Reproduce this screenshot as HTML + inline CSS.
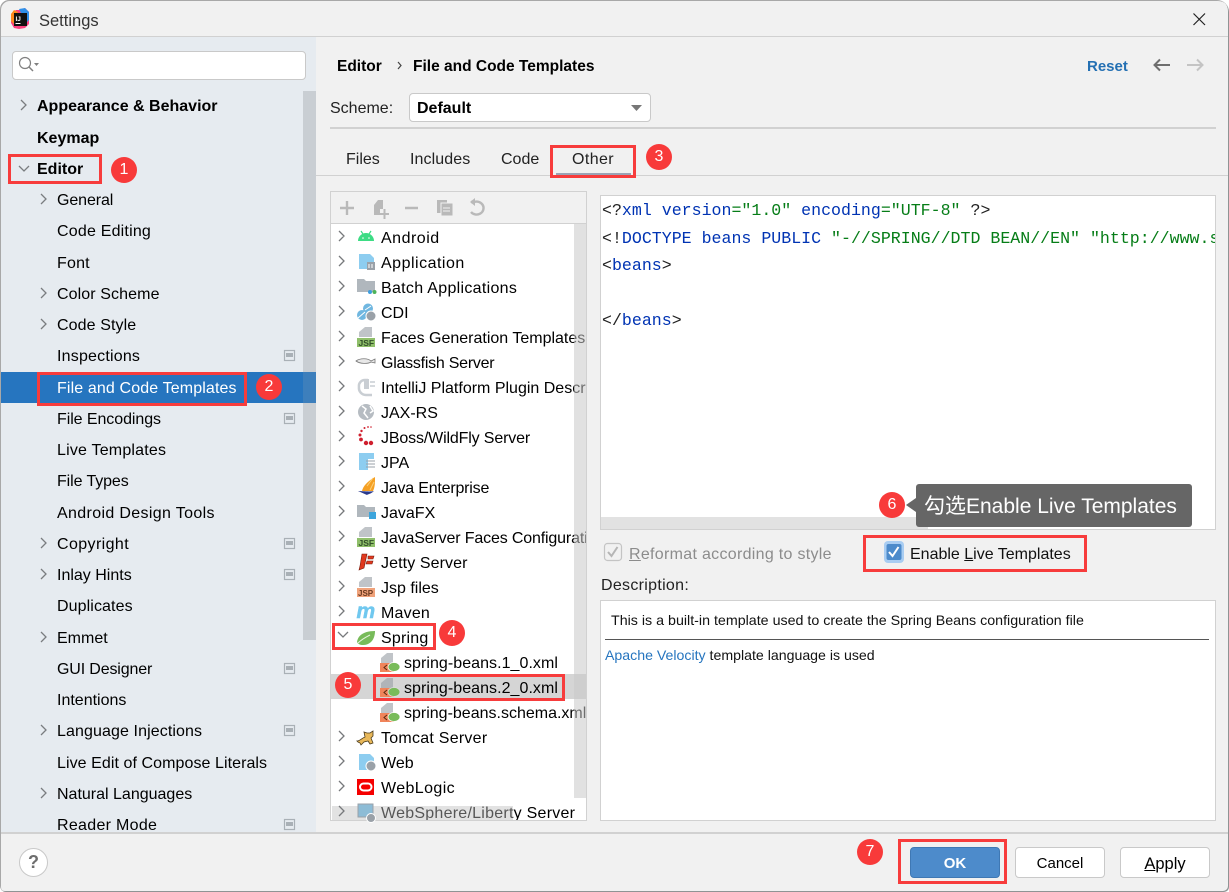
<!DOCTYPE html>
<html><head><meta charset="utf-8"><style>
html,body{margin:0;padding:0;width:1229px;height:892px;overflow:hidden;background:#fff}
body{font-family:"Liberation Sans","Noto Sans CJK SC",sans-serif;font-size:16px;color:#000}
div{position:absolute}
.t{position:absolute;white-space:nowrap;line-height:20px;height:20px;margin-top:2px}
.b{font-weight:bold}
.m{font-family:"Liberation Mono",monospace;font-size:16.6px;color:#0033b3;margin-top:0}
.m i{font-style:normal;color:#067d17}.m u{text-decoration:none;color:#222}
.d{font-size:14.25px;margin-top:1px}
.r{border:3px solid #f73c3c;box-sizing:border-box}
.c{width:26px;height:26px;border-radius:50%;background:#f83a3a;color:#fff;text-align:center;line-height:25px;font-size:16px}
.btn{box-sizing:border-box;border:1px solid #c9c9c9;border-radius:4px;background:#fff;text-align:center;line-height:32px;height:31px;top:847px;width:90px;font-size:15px}
svg{position:absolute;left:0;top:0}
</style></head><body>
<div style="left:0;top:0;width:1229px;height:892px;background:#f1f1f1;border-radius:9px 12px 5px 6px;box-shadow:inset 1px 1px 0 #a8a8a8,inset -1px -1px 0 #8f9494"></div>
<div style="left:1px;top:36px;width:1227px;height:1px;background:#d1d1d1"></div>
<div style="left:1px;top:37px;width:315px;height:796px;background:#e6ebf0"></div>
<div style="left:303px;top:91px;width:13px;height:549px;background:#c9ced3"></div>
<div style="left:1px;top:372px;width:315px;height:31px;background:#2675bf"></div>
<div style="left:303px;top:372px;width:13px;height:31px;background:#3d7fbc"></div>
<div style="left:1px;top:832px;width:1227px;height:2px;background:#d1d1d1"></div>
<div style="left:12px;top:51px;width:294px;height:29px;box-sizing:border-box;background:#fff;border:1px solid #c9c9c9;border-radius:4px"></div>

<span class="t" style="left:39px;top:9px;color:#333;font-size:16.5px">Settings</span>
<span class="t b" style="left:37px;top:95px">Appearance &amp; Behavior</span>
<span class="t b" style="left:37px;top:127px">Keymap</span>
<span class="t b" style="left:37px;top:158px">Editor</span>
<span class="t" style="left:57px;top:189px;letter-spacing:-.1px">General</span>
<span class="t" style="left:57px;top:220px;letter-spacing:.2px">Code Editing</span>
<span class="t" style="left:57px;top:252px;letter-spacing:.2px">Font</span>
<span class="t" style="left:57px;top:283px;letter-spacing:.1px">Color Scheme</span>
<span class="t" style="left:57px;top:314px;letter-spacing:.1px">Code Style</span>
<span class="t" style="left:57px;top:345px;letter-spacing:.2px">Inspections</span>
<span class="t" style="left:57px;top:377px;color:#fff;letter-spacing:.13px">File and Code Templates</span>
<span class="t" style="left:57px;top:408px;letter-spacing:-.07px">File Encodings</span>
<span class="t" style="left:57px;top:439px;letter-spacing:.2px">Live Templates</span>
<span class="t" style="left:57px;top:470px;letter-spacing:-.1px">File Types</span>
<span class="t" style="left:57px;top:502px;letter-spacing:.35px">Android Design Tools</span>
<span class="t" style="left:57px;top:533px;letter-spacing:.4px">Copyright</span>
<span class="t" style="left:57px;top:564px">Inlay Hints</span>
<span class="t" style="left:57px;top:595px;letter-spacing:.1px">Duplicates</span>
<span class="t" style="left:57px;top:627px">Emmet</span>
<span class="t" style="left:57px;top:658px;letter-spacing:-.15px">GUI Designer</span>
<span class="t" style="left:57px;top:689px">Intentions</span>
<span class="t" style="left:57px;top:720px;letter-spacing:.1px">Language Injections</span>
<span class="t" style="left:57px;top:752px;letter-spacing:.07px">Live Edit of Compose Literals</span>
<span class="t" style="left:57px;top:783px">Natural Languages</span>
<div style="left:1px;top:814px;width:315px;height:18px;overflow:hidden"><span class="t" style="left:56px;top:0;letter-spacing:.3px">Reader Mode</span></div>

<span class="t b" style="left:337px;top:55px;font-size:15.5px">Editor</span>
<span class="t b" style="left:413px;top:55px;font-size:15.5px">File and Code Templates</span>
<span class="t b" style="left:1087px;top:55px;color:#2470b3;font-size:15px">Reset</span>
<span class="t" style="left:330px;top:97px;color:#222">Scheme:</span>
<div style="left:409px;top:93px;width:242px;height:29px;box-sizing:border-box;background:#fff;border:1px solid #c9c9c9;border-radius:4px"></div>
<span class="t b" style="left:417px;top:97px">Default</span>
<div style="left:330px;top:127px;width:886px;height:2px;background:#d1d1d1"></div>
<div style="left:316px;top:175px;width:912px;height:1px;background:#d1d1d1"></div>
<div style="left:556px;top:173px;width:75px;height:3px;background:#9ba3b5"></div>
<span class="t" style="left:346px;top:148px;color:#222">Files</span>
<span class="t" style="left:410px;top:148px;color:#222;letter-spacing:.1px">Includes</span>
<span class="t" style="left:501px;top:148px;color:#222">Code</span>
<span class="t" style="left:572px;top:148px;color:#222;letter-spacing:.4px">Other</span>

<div style="left:330px;top:191px;width:257px;height:630px;box-sizing:border-box;background:#fff;border:1px solid #d1d1d1;overflow:hidden">
<div style="left:0;top:0;width:255px;height:31px;background:#f1f1f1;border-bottom:1px solid #d1d1d1"></div>
<div style="left:0;top:482px;width:255px;height:25px;background:#d5d5d5"></div>
<span class="t" style="left:50px;top:35px;letter-spacing:.5px">Android</span>
<span class="t" style="left:50px;top:60px;letter-spacing:.5px">Application</span>
<span class="t" style="left:50px;top:85px;letter-spacing:.3px">Batch Applications</span>
<span class="t" style="left:50px;top:110px">CDI</span>
<span class="t" style="left:50px;top:135px">Faces Generation Templates</span>
<span class="t" style="left:50px;top:160px;letter-spacing:-.25px">Glassfish Server</span>
<span class="t" style="left:50px;top:185px">IntelliJ Platform Plugin Descr</span>
<span class="t" style="left:50px;top:210px">JAX-RS</span>
<span class="t" style="left:50px;top:235px;letter-spacing:-.15px">JBoss/WildFly Server</span>
<span class="t" style="left:50px;top:260px">JPA</span>
<span class="t" style="left:50px;top:285px;letter-spacing:-.2px">Java Enterprise</span>
<span class="t" style="left:50px;top:310px">JavaFX</span>
<span class="t" style="left:50px;top:335px;letter-spacing:-.15px">JavaServer Faces Configurati</span>
<span class="t" style="left:50px;top:360px;letter-spacing:.1px">Jetty Server</span>
<span class="t" style="left:50px;top:385px">Jsp files</span>
<span class="t" style="left:50px;top:410px;letter-spacing:.2px">Maven</span>
<span class="t" style="left:50px;top:435px;letter-spacing:.2px">Spring</span>
<span class="t" style="left:73px;top:460px;letter-spacing:.05px">spring-beans.1_0.xml</span>
<span class="t" style="left:73px;top:485px;letter-spacing:.05px">spring-beans.2_0.xml</span>
<span class="t" style="left:73px;top:510px">spring-beans.schema.xml</span>
<span class="t" style="left:50px;top:535px;letter-spacing:.25px">Tomcat Server</span>
<span class="t" style="left:50px;top:560px">Web</span>
<span class="t" style="left:50px;top:585px;letter-spacing:.4px">WebLogic</span>
<span class="t" style="left:50px;top:610px;letter-spacing:.25px">WebSphere/Liberty Server</span>
<div style="left:243px;top:32px;width:12px;height:574px;background:rgba(200,200,200,.55)"></div>
<div style="left:1px;top:614px;width:181px;height:14px;background:rgba(190,190,190,.45)"></div>
</div>

<div style="left:600px;top:195px;width:616px;height:335px;box-sizing:border-box;background:#fff;border:1px solid #d1d1d1;overflow:hidden">
<span class="t m" style="left:1px;top:4px;line-height:22px"><u>&lt;?</u>xml version<i>="1.0"</i> encoding<i>="UTF-8"</i> <u>?&gt;</u></span>
<span class="t m" style="left:1px;top:32px;line-height:22px"><u>&lt;!</u>DOCTYPE beans PUBLIC <i>"-//SPRING//DTD BEAN//EN" "http://www.springframework</i></span>
<span class="t m" style="left:1px;top:59px;line-height:22px"><u>&lt;</u>beans<u>&gt;</u></span>
<span class="t m" style="left:1px;top:114px;line-height:22px"><u>&lt;/</u>beans<u>&gt;</u></span>
<div style="left:0;top:321px;width:327px;height:12px;background:#e2e2e2"></div>
</div>
<div style="left:916px;top:484px;width:276px;height:43px;background:#666;border-radius:3px"></div>
<div style="left:906px;top:498px;width:0;height:0;border:7px solid transparent;border-left:0;border-right:10px solid #666"></div>
<span class="t" style="left:924px;top:495px;color:#fff;font-size:21px;line-height:24px;height:24px;margin-top:0">勾选Enable Live Templates</span>

<span class="t" style="left:629px;top:543px;color:#8c8c8c;letter-spacing:.3px"><span style="text-decoration:underline">R</span>eformat according to style</span>
<span class="t" style="left:910px;top:543px;color:#111">Enable <span style="text-decoration:underline">L</span>ive Templates</span>
<span class="t" style="left:601px;top:574px;color:#222;letter-spacing:.3px">Description:</span>
<div style="left:600px;top:600px;width:616px;height:221px;box-sizing:border-box;background:#fff;border:1px solid #d1d1d1"></div>
<span class="t d" style="left:611px;top:610px;color:#111">This is a built-in template used to create the Spring Beans configuration file</span>
<div style="left:605px;top:639px;width:604px;height:1px;background:#555"></div>
<span class="t d" style="left:605px;top:644px;color:#111;font-size:14.15px"><span style="color:#2675bf">Apache Velocity</span> template language is used</span>

<div style="left:19px;top:848px;width:29px;height:29px;box-sizing:border-box;border:1px solid #c9c9c9;border-radius:50%;background:#fff;text-align:center;line-height:27px;font-weight:bold;font-size:18px;color:#6e6e6e">?</div>
<div class="btn b" style="left:910px;background:#4d8bcb;border-color:#3f78b4;color:#fff">OK</div>
<div class="btn" style="left:1015px">Cancel</div>
<div class="btn" style="left:1120px;font-size:16.5px"><span style="text-decoration:underline">A</span>pply</div>

<svg width="1229" height="892" viewBox="0 0 1229 892" fill="none">
<!-- logo -->
<path d="M11 14l5-4 5 0 4-2 4 4v12l-4 4-6 1-5-1-3-5z" fill="#fc3f7f"/><path d="M19 9l6-1 4 4 0 8-3 3z" fill="#2f8fe8"/><path d="M11 14l3-4 4 2-4 12-3-3z" fill="#fd8a1e"/>
<rect x="14" y="13" width="13" height="13" fill="#111"/><text x="15.500" y="21" font-family="Liberation Sans" font-size="6.500" font-weight="bold" fill="#fff">IJ</text><rect x="15.500" y="23" width="5" height="1" fill="#fff"/>
<!-- close -->
<path d="M1193.500 13.500L1205 25M1205 13.500L1193.500 25" stroke="#222" stroke-width="1.200"/>
<!-- search -->
<circle cx="25" cy="63" r="5.500" stroke="#808080" stroke-width="1.200"/><path d="M29 67l4 4" stroke="#808080" stroke-width="1.500"/><path d="M34 63h5l-2.500 3z" fill="#808080"/>
<!-- sidebar chevrons -->
<g stroke="#7a7d80" stroke-width="1.300">
<path d="M21 100l5 5-5 5M41 194l5 5-5 5M41 288l5 5-5 5M41 319l5 5-5 5M41 538l5 5-5 5M41 569l5 5-5 5M41 632l5 5-5 5M41 725l5 5-5 5M41 788l5 5-5 5"/>
<path d="M19 166l5 5 5-5"/>
</g>
<!-- project icons -->
<g fill="#e6ebf0" stroke="#a9b0b6" stroke-width="1.200">
<rect x="284.500" y="350.500" width="10" height="10"/><rect x="284.500" y="413.500" width="10" height="10"/><rect x="284.500" y="538.500" width="10" height="10"/><rect x="284.500" y="569.500" width="10" height="10"/><rect x="284.500" y="663.500" width="10" height="10"/><rect x="284.500" y="725.500" width="10" height="10"/><rect x="284.500" y="819.500" width="10" height="10"/>
</g>
<g fill="#a9b0b6"><rect x="286" y="353" width="7" height="4"/><rect x="286" y="416" width="7" height="4"/><rect x="286" y="541" width="7" height="4"/><rect x="286" y="572" width="7" height="4"/><rect x="286" y="666" width="7" height="4"/><rect x="286" y="728" width="7" height="4"/><rect x="286" y="822" width="7" height="4"/></g>
<!-- breadcrumb sep, arrows, combo -->
<path d="M398 62l3 3.500-3 3.500" stroke="#444" stroke-width="1.200"/>
<path d="M1170 65h-15M1160 59.500l-5.500 5.500 5.500 5.500" stroke="#6e6e6e" stroke-width="2"/>
<path d="M1187 65h15M1197 59.500l5.500 5.500-5.500 5.500" stroke="#c4c4c4" stroke-width="2"/>
<path d="M631 105h11l-5.500 6z" fill="#777"/>
<!-- tree toolbar -->
<g stroke="#b9b9b9" stroke-width="2.400">
<path d="M340 208h14M347 201v14M405 208h13"/>
<path d="M471 202h3a7 6.500 0 1 1-3 10" fill="none"/>
</g>
<path d="M470 202l5-4v8z" fill="#b9b9b9"/>
<path d="M374 205l4-5h5v9h-3v6h-6z" fill="#b9b9b9"/><path d="M380 214h9M384.500 209v10" stroke="#b9b9b9" stroke-width="2"/>
<rect x="437" y="200" width="10" height="13" fill="#b9b9b9"/><rect x="441" y="203" width="12" height="13" fill="#b9b9b9" stroke="#f1f1f1"/><path d="M443 208h7M443 211h7" stroke="#f1f1f1"/>
<!-- tree chevrons -->
<g stroke="#77797c" stroke-width="1.300">
<path d="M339 231l5 5-5 5M339 256l5 5-5 5M339 281l5 5-5 5M339 306l5 5-5 5M339 331l5 5-5 5M339 356l5 5-5 5M339 381l5 5-5 5M339 406l5 5-5 5M339 431l5 5-5 5M339 456l5 5-5 5M339 481l5 5-5 5M339 506l5 5-5 5M339 531l5 5-5 5M339 556l5 5-5 5M339 581l5 5-5 5M339 606l5 5-5 5M339 731l5 5-5 5M339 756l5 5-5 5M339 781l5 5-5 5M339 806l5 5-5 5"/>
<path d="M338 632l5 5 5-5"/>
</g>
<!-- android -->
<path d="M358 241a8 8 0 0 1 16 0z" fill="#3ddc84"/><path d="M361 231l2 3M371 231l-2 3" stroke="#3ddc84" stroke-width="1.200"/><circle cx="363" cy="238" r=".8" fill="#fff"/><circle cx="369" cy="238" r=".8" fill="#fff"/>
<!-- application -->
<path d="M359 254h11l4 4v4h-7v7h-8z" fill="#8dcdf0"/><rect x="367" y="262" width="8" height="8" fill="#9aa1a8"/><path d="M369 264v4M372 264v4" stroke="#fff"/>
<!-- batch -->
<path d="M357 279h7l2 2h9v11h-18z" fill="#b0b7bd"/><circle cx="370" cy="292" r="2" fill="#3d9ee0"/><circle cx="374.500" cy="292" r="2" fill="#4cb35a"/>
<!-- cdi -->
<circle cx="362" cy="315" r="5" fill="#70b7e0"/><circle cx="368" cy="308.500" r="5" fill="#70b7e0"/><path d="M358 318l7-6M365 310l6-4" stroke="#fff"/><circle cx="371" cy="316" r="5" fill="#9aa1a8" stroke="#fff"/>
<!-- JSF -->
<path d="M365 327h7v10h-13v-5z" fill="#c0c4c8"/><rect x="357" y="338" width="18" height="9" fill="#8fbf6a"/><text x="358.500" y="346" font-family="Liberation Sans" font-size="8.500" font-weight="bold" fill="#33502a">JSF</text>
<!-- glassfish -->
<path d="M356 361c4-3 12-3 15 0l4-2v4l-4-1c-3 2-11 2-15-1z" fill="#e8e8e8" stroke="#777" stroke-width=".8"/>
<!-- plugin -->
<path d="M368 380h-3a6 6 0 0 0-6 7 7 7 0 0 0 7 8h6" stroke="#c9ced3" stroke-width="2.500"/><rect x="364" y="379" width="5" height="10" fill="#c9ced3"/><path d="M370 382h5M370 386h5" stroke="#c9ced3" stroke-width="1.500"/>
<!-- jax-rs -->
<circle cx="366" cy="412" r="8" fill="#b6bcc2"/><path d="M362 406l4 3-2 4 4 5M370 406l3 5-3 2" stroke="#fff" stroke-width="1.500"/>
<!-- jboss -->
<g fill="#cf1f2e"><circle cx="371" cy="443" r="2.200"/><circle cx="366" cy="443" r="2.200"/><circle cx="361" cy="439.500" r="1.900"/><circle cx="360" cy="435" r="1.500"/><circle cx="361.500" cy="431" r="1.200"/><circle cx="364.500" cy="428" r="1"/><circle cx="368" cy="427" r=".9"/><circle cx="371" cy="427" r=".8"/></g>
<!-- jpa -->
<path d="M359 453h15v6h-6v11h-9z" fill="#8dcdf0"/><path d="M366 461h9M366 464h9M366 467h9" stroke="#9aa1a8"/>
<!-- java ent -->
<path d="M362 491c1-5 6-10 13-14 0 6 0 10-2 14z" fill="#f5a023"/><path d="M367 486l6-8M370 490l4-8" stroke="#fbd07a"/><path d="M358 491c3 0 13 1 16 0-3 3-6 3-7 4z" fill="#2b3a8c"/>
<!-- javafx -->
<path d="M357 505h7l2 2h9v10h-18z" fill="#b0b7bd"/><rect x="369" y="512" width="7" height="7" fill="#3da5dc"/>
<!-- jsf 2 -->
<path d="M365 527h7v10h-13v-5z" fill="#c0c4c8"/><rect x="357" y="538" width="18" height="9" fill="#8fbf6a"/><text x="358.500" y="546" font-family="Liberation Sans" font-size="8.500" font-weight="bold" fill="#33502a">JSF</text>
<!-- jetty -->
<path d="M362 554h5l-3 14-5 2 1-4zM368 556h6l-1 3h-5zM367 561h6l-1 3h-6z" fill="#e0391e" stroke="#7a1a0c" stroke-width=".6"/>
<!-- jsp -->
<path d="M365 577h7v10h-13v-5z" fill="#c0c4c8"/><rect x="357" y="588" width="18" height="9" fill="#f0a27a"/><text x="358" y="596" font-family="Liberation Sans" font-size="8" font-weight="bold" fill="#6a3a20">JSP</text>
<!-- maven -->
<text x="356.500" y="618" font-family="Liberation Sans" font-size="21" font-weight="bold" font-style="italic" fill="#70c8ef" stroke="#70c8ef" stroke-width=".5">m</text>
<!-- spring -->
<path d="M357 642c1-8 9-11 18-11 0 9-5 14-12 14-3 0-5-1-6-3z" fill="#78bb5a"/><path d="M358 643c4-4 8-6 12-8" stroke="#e6f3de"/>
<!-- spring files -->
<g>
<path d="M387 653h6v10h-12v-5z" fill="#c0c4c8"/><rect x="380" y="663" width="14" height="9" fill="#f0845a"/><path d="M387 665l-3 2.500 3 2.500" stroke="#5a2a10"/><ellipse cx="394" cy="667" rx="6" ry="4.500" fill="#78bb5a" stroke="#fff" stroke-width=".7"/>
</g>
<g transform="translate(0,25)"><path d="M387 653h6v10h-12v-5z" fill="#b0b4b8"/><rect x="380" y="663" width="14" height="9" fill="#f0845a"/><path d="M387 665l-3 2.500 3 2.500" stroke="#5a2a10"/><ellipse cx="394" cy="667" rx="6" ry="4.500" fill="#78bb5a" stroke="#ddd" stroke-width=".7"/></g>
<g transform="translate(0,50)"><path d="M387 653h6v10h-12v-5z" fill="#c0c4c8"/><rect x="380" y="663" width="14" height="9" fill="#f0845a"/><path d="M387 665l-3 2.500 3 2.500" stroke="#5a2a10"/><ellipse cx="394" cy="667" rx="6" ry="4.500" fill="#78bb5a" stroke="#fff" stroke-width=".7"/></g>
<!-- tomcat -->
<path d="M357 741c3 0 5-3 8-4l-1-5 3 1h3l3-2v5l-2 2 2 5-3 1-2-3-4 1-3 3-1-2-2-1z" fill="#e8b85a" stroke="#4a3a1a" stroke-width=".8"/>
<!-- web -->
<path d="M359 754h11l4 4v4h-7v8h-8z" fill="#8dcdf0"/><circle cx="371" cy="766" r="5" fill="#9aa1a8" stroke="#fff"/>
<!-- weblogic -->
<rect x="357" y="779" width="17" height="16" fill="#f50000"/><rect x="360" y="783.500" width="11.500" height="7" rx="3.500" stroke="#fff" stroke-width="2"/>
<!-- websphere -->
<rect x="358" y="804" width="15" height="13" fill="#8dbcd6" stroke="#9aa1a8"/><circle cx="371" cy="818" r="4.500" fill="#9aa1a8" stroke="#fff"/>
<!-- checkboxes -->
<rect x="604.500" y="543.500" width="17" height="17" rx="3" fill="#f1f1f1" stroke="#c4c4c4" stroke-width="1.200"/><path d="M608 552l3.500 4 6-9" stroke="#b5b5b5" stroke-width="2"/>
<rect x="884" y="541" width="20" height="22" rx="4" fill="#a9cdf2"/><rect x="886.500" y="544" width="15" height="16" rx="2" fill="#4d8bcb"/><path d="M889 552l3.500 4 6-9" stroke="#fff" stroke-width="2"/>
</svg>

<div class="r" style="left:8px;top:154px;width:94px;height:30px"></div>
<div class="r" style="left:37px;top:372px;width:210px;height:34px"></div>
<div class="r" style="left:550px;top:145px;width:86px;height:33px"></div>
<div class="r" style="left:332px;top:623px;width:104px;height:27px"></div>
<div class="r" style="left:373px;top:674px;width:192px;height:27px"></div>
<div class="r" style="left:863px;top:535px;width:224px;height:37px"></div>
<div class="r" style="left:898px;top:839px;width:109px;height:45px"></div>
<div class="c" style="left:111px;top:157px">1</div>
<div class="c" style="left:256px;top:374px">2</div>
<div class="c" style="left:646px;top:144px">3</div>
<div class="c" style="left:439px;top:620px">4</div>
<div class="c" style="left:335px;top:672px">5</div>
<div class="c" style="left:879px;top:492px">6</div>
<div class="c" style="left:857px;top:839px">7</div>
</body></html>
